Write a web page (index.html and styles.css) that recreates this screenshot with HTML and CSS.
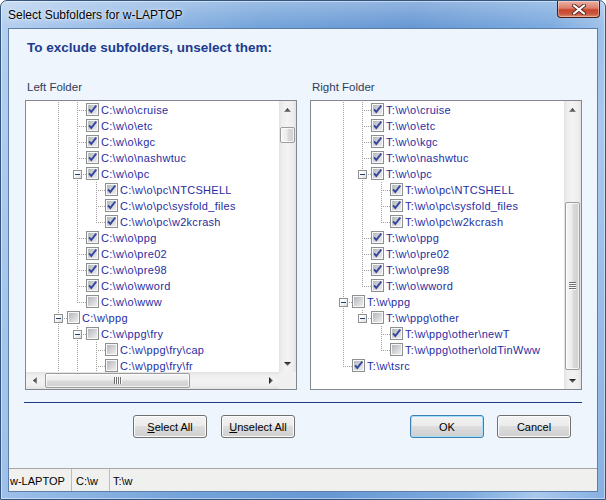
FILE: index.html
```html
<!DOCTYPE html>
<html>
<head>
<meta charset="utf-8">
<title>Select Subfolders for w-LAPTOP</title>
<link rel="stylesheet" href="styles.css">
</head>
<body>
<svg class="defs" width="0" height="0" aria-hidden="true">
  <defs>
    <linearGradient id="cbg" x1="0" y1="0" x2="1" y2="1">
      <stop offset="0" stop-color="#b4b8bd"/>
      <stop offset="1" stop-color="#eeeeee"/>
    </linearGradient>
    <linearGradient id="arw" x1="0" y1="0" x2="0" y2="1">
      <stop offset="0" stop-color="#1a1a1a"/>
      <stop offset="1" stop-color="#8a8a8a"/>
    </linearGradient>
    <linearGradient id="arwh" x1="0" y1="0" x2="1" y2="0">
      <stop offset="0" stop-color="#1a1a1a"/>
      <stop offset="1" stop-color="#8a8a8a"/>
    </linearGradient>
    <symbol id="on" viewBox="0 0 13 13">
      <rect x=".5" y=".5" width="12" height="12" fill="#f7f7f7" stroke="#8e8f8f"/>
      <rect x="2" y="2" width="9" height="9" fill="url(#cbg)"/>
      <path d="M3 6.3 L5.3 8.9 L10.3 2.5" fill="none" stroke="#33479b" stroke-width="1.9"/>
    </symbol>
    <symbol id="off" viewBox="0 0 13 13">
      <rect x=".5" y=".5" width="12" height="12" fill="#f7f7f7" stroke="#8e8f8f"/>
      <rect x="2" y="2" width="9" height="9" fill="url(#cbg)"/>
    </symbol>
    <symbol id="up" viewBox="0 0 7 4"><polygon points="0,4 3.5,0 7,4" fill="url(#arw)"/></symbol>
    <symbol id="dn" viewBox="0 0 7 4"><polygon points="0,0 7,0 3.5,4" fill="url(#arw)"/></symbol>
    <symbol id="lt" viewBox="0 0 4 7"><polygon points="4,0 4,7 0,3.5" fill="url(#arwh)"/></symbol>
    <symbol id="rt" viewBox="0 0 4 7"><polygon points="0,0 4,3.5 0,7" fill="url(#arwh)"/></symbol>
  </defs>
</svg>

<div class="window">
  <div class="titlebar">
    <span class="title">Select Subfolders for w-LAPTOP</span>
    <div class="close">
      <svg width="14" height="11" viewBox="0 0 14 11">
        <path d="M2 1.5 L12 9.5 M12 1.5 L2 9.5" stroke="#5a2a22" stroke-width="4" stroke-linecap="round"/>
        <path d="M2 1.5 L12 9.5 M12 1.5 L2 9.5" stroke="#ffffff" stroke-width="2.2" stroke-linecap="round"/>
      </svg>
    </div>
  </div>

  <div class="client">
    <div class="content">
      <h1 class="heading">To exclude subfolders, unselect them:</h1>

      <div class="panes">
        <div class="pane">
          <div class="pane-label">Left Folder</div>
          <div class="tree-box with-h">
            <div class="tree">
              <div class="row"><i class="c"></i><i class="c v"></i><i class="k t"></i><svg class="cb"><use href="#on"/></svg><span class="tx">C:\w\o\cruise</span></div>
              <div class="row"><i class="c"></i><i class="c v"></i><i class="k t"></i><svg class="cb"><use href="#on"/></svg><span class="tx">C:\w\o\etc</span></div>
              <div class="row"><i class="c"></i><i class="c v"></i><i class="k t"></i><svg class="cb"><use href="#on"/></svg><span class="tx">C:\w\o\kgc</span></div>
              <div class="row"><i class="c"></i><i class="c v"></i><i class="k t"></i><svg class="cb"><use href="#on"/></svg><span class="tx">C:\w\o\nashwtuc</span></div>
              <div class="row"><i class="c"></i><i class="c v"></i><i class="k t"><b class="exp"></b></i><svg class="cb"><use href="#on"/></svg><span class="tx">C:\w\o\pc</span></div>
              <div class="row"><i class="c"></i><i class="c v"></i><i class="c v"></i><i class="k t"></i><svg class="cb"><use href="#on"/></svg><span class="tx">C:\w\o\pc\NTCSHELL</span></div>
              <div class="row"><i class="c"></i><i class="c v"></i><i class="c v"></i><i class="k t"></i><svg class="cb"><use href="#on"/></svg><span class="tx">C:\w\o\pc\sysfold_files</span></div>
              <div class="row"><i class="c"></i><i class="c v"></i><i class="c v"></i><i class="k l"></i><svg class="cb"><use href="#on"/></svg><span class="tx">C:\w\o\pc\w2kcrash</span></div>
              <div class="row"><i class="c"></i><i class="c v"></i><i class="k t"></i><svg class="cb"><use href="#on"/></svg><span class="tx">C:\w\o\ppg</span></div>
              <div class="row"><i class="c"></i><i class="c v"></i><i class="k t"></i><svg class="cb"><use href="#on"/></svg><span class="tx">C:\w\o\pre02</span></div>
              <div class="row"><i class="c"></i><i class="c v"></i><i class="k t"></i><svg class="cb"><use href="#on"/></svg><span class="tx">C:\w\o\pre98</span></div>
              <div class="row"><i class="c"></i><i class="c v"></i><i class="k t"></i><svg class="cb"><use href="#on"/></svg><span class="tx">C:\w\o\wword</span></div>
              <div class="row"><i class="c"></i><i class="c v"></i><i class="k l"></i><svg class="cb"><use href="#off"/></svg><span class="tx">C:\w\o\www</span></div>
              <div class="row"><i class="c"></i><i class="k t"><b class="exp"></b></i><svg class="cb"><use href="#off"/></svg><span class="tx">C:\w\ppg</span></div>
              <div class="row"><i class="c"></i><i class="c v"></i><i class="k t"><b class="exp"></b></i><svg class="cb"><use href="#off"/></svg><span class="tx">C:\w\ppg\fry</span></div>
              <div class="row"><i class="c"></i><i class="c v"></i><i class="c v"></i><i class="k t"></i><svg class="cb"><use href="#off"/></svg><span class="tx">C:\w\ppg\fry\cap</span></div>
              <div class="row"><i class="c"></i><i class="c v"></i><i class="c v"></i><i class="k t"></i><svg class="cb"><use href="#off"/></svg><span class="tx">C:\w\ppg\fry\fr</span></div>
            </div>
            <div class="vscroll">
              <div class="arrow"><svg class="ag-v"><use href="#up"/></svg></div>
              <div class="vtrack"><div class="vthumb thumb-l"></div></div>
              <div class="arrow"><svg class="ag-v"><use href="#dn"/></svg></div>
            </div>
            <div class="hscroll">
              <div class="harrow"><svg class="ag-h"><use href="#lt"/></svg></div>
              <div class="htrack"><div class="hthumb"><span class="hgrip"></span></div></div>
              <div class="harrow"><svg class="ag-h"><use href="#rt"/></svg></div>
            </div>
            <div class="corner"></div>
          </div>
        </div>

        <div class="pane">
          <div class="pane-label">Right Folder</div>
          <div class="tree-box">
            <div class="tree">
              <div class="row"><i class="c"></i><i class="c v"></i><i class="k t"></i><svg class="cb"><use href="#on"/></svg><span class="tx">T:\w\o\cruise</span></div>
              <div class="row"><i class="c"></i><i class="c v"></i><i class="k t"></i><svg class="cb"><use href="#on"/></svg><span class="tx">T:\w\o\etc</span></div>
              <div class="row"><i class="c"></i><i class="c v"></i><i class="k t"></i><svg class="cb"><use href="#on"/></svg><span class="tx">T:\w\o\kgc</span></div>
              <div class="row"><i class="c"></i><i class="c v"></i><i class="k t"></i><svg class="cb"><use href="#on"/></svg><span class="tx">T:\w\o\nashwtuc</span></div>
              <div class="row"><i class="c"></i><i class="c v"></i><i class="k t"><b class="exp"></b></i><svg class="cb"><use href="#on"/></svg><span class="tx">T:\w\o\pc</span></div>
              <div class="row"><i class="c"></i><i class="c v"></i><i class="c v"></i><i class="k t"></i><svg class="cb"><use href="#on"/></svg><span class="tx">T:\w\o\pc\NTCSHELL</span></div>
              <div class="row"><i class="c"></i><i class="c v"></i><i class="c v"></i><i class="k t"></i><svg class="cb"><use href="#on"/></svg><span class="tx">T:\w\o\pc\sysfold_files</span></div>
              <div class="row"><i class="c"></i><i class="c v"></i><i class="c v"></i><i class="k l"></i><svg class="cb"><use href="#on"/></svg><span class="tx">T:\w\o\pc\w2kcrash</span></div>
              <div class="row"><i class="c"></i><i class="c v"></i><i class="k t"></i><svg class="cb"><use href="#on"/></svg><span class="tx">T:\w\o\ppg</span></div>
              <div class="row"><i class="c"></i><i class="c v"></i><i class="k t"></i><svg class="cb"><use href="#on"/></svg><span class="tx">T:\w\o\pre02</span></div>
              <div class="row"><i class="c"></i><i class="c v"></i><i class="k t"></i><svg class="cb"><use href="#on"/></svg><span class="tx">T:\w\o\pre98</span></div>
              <div class="row"><i class="c"></i><i class="c v"></i><i class="k l"></i><svg class="cb"><use href="#on"/></svg><span class="tx">T:\w\o\wword</span></div>
              <div class="row"><i class="c"></i><i class="k t"><b class="exp"></b></i><svg class="cb"><use href="#off"/></svg><span class="tx">T:\w\ppg</span></div>
              <div class="row"><i class="c"></i><i class="c v"></i><i class="k l"><b class="exp"></b></i><svg class="cb"><use href="#off"/></svg><span class="tx">T:\w\ppg\other</span></div>
              <div class="row"><i class="c"></i><i class="c v"></i><i class="c"></i><i class="k t"></i><svg class="cb"><use href="#on"/></svg><span class="tx">T:\w\ppg\other\newT</span></div>
              <div class="row"><i class="c"></i><i class="c v"></i><i class="c"></i><i class="k l"></i><svg class="cb"><use href="#off"/></svg><span class="tx">T:\w\ppg\other\oldTinWww</span></div>
              <div class="row"><i class="c"></i><i class="k l"></i><svg class="cb"><use href="#on"/></svg><span class="tx">T:\w\tsrc</span></div>
            </div>
            <div class="vscroll">
              <div class="arrow"><svg class="ag-v"><use href="#up"/></svg></div>
              <div class="vtrack"><div class="vthumb thumb-r"><span class="vgrip"></span></div></div>
              <div class="arrow"><svg class="ag-v"><use href="#dn"/></svg></div>
            </div>
          </div>
        </div>
      </div>

      <div class="separator"></div>

      <div class="buttons">
        <div class="btn-group">
          <button class="btn"><u>S</u>elect All</button>
          <button class="btn"><u>U</u>nselect All</button>
        </div>
        <div class="btn-group right">
          <button class="btn default">OK</button>
          <button class="btn">Cancel</button>
        </div>
      </div>
    </div>

    <div class="statusbar">
      <div class="panel p1">w-LAPTOP</div>
      <div class="panel p2">C:\w</div>
      <div class="panel p3">T:\w</div>
    </div>
  </div>
</div>
</body>
</html>
```

FILE: styles.css
```css
* { box-sizing: border-box; }

body {
  margin: 0;
  background: #ffffff;
  font-family: "Liberation Sans", Arial, sans-serif;
}

.defs {
  display: block;
  width: 0;
  height: 0;
  overflow: hidden;
}

/* ---------- window frame ---------- */
.window {
  width: 606px;
  height: 500px;
  display: flex;
  flex-direction: column;
  padding: 0 7px 7px 7px;
  border: 1px solid #34557e;
  border-radius: 7px 7px 0 0;
  background:
    linear-gradient(to bottom, rgba(255,255,255,0.28), rgba(255,255,255,0) 26px),
    linear-gradient(100deg, #b6d0ef 0%, #98bce8 16%, #75a4da 38%, #6898d4 60%, #7dabdf 80%, #a9c8ed 90%, #86b0e2 100%);
  box-shadow: inset 0 0 0 1px rgba(255,255,255,0.45);
}

.titlebar {
  height: 27px;
  display: flex;
  align-items: center;
  margin-right: -7px;
}

.title {
  flex: 1;
  font-size: 12px;
  color: #000;
  padding-top: 1px;
  text-shadow: 0 0 6px rgba(255,255,255,0.9), 0 0 2px rgba(255,255,255,0.8);
}

.close {
  align-self: flex-start;
  width: 43px;
  height: 17px;
  margin-right: 5px;
  border: 1px solid #4d1c14;
  border-top: none;
  border-radius: 0 0 4px 4px;
  background: linear-gradient(to bottom, #eab1a6 0%, #dc7d6a 45%, #c8462c 55%, #c9583f 80%, #e08a6c 100%);
  box-shadow: inset 0 0 0 1px rgba(255,255,255,0.35);
  display: flex;
  align-items: center;
  justify-content: center;
}

/* ---------- client area ---------- */
.client {
  height: 464px;
  display: flex;
  flex-direction: column;
  background: #eef5fd;
  border: 1px solid #5d7ea9;
}

.content {
  padding: 11px 15px 0 16px;
}

.heading {
  margin: 0;
  padding-left: 2px;
  font-size: 13.5px;
  line-height: 16px;
  font-weight: bold;
  color: #1b3c8f;
}

.panes {
  display: flex;
  gap: 13px;
  margin-top: 23px;
}

.pane {
  width: 272px;
}

.pane-label {
  padding-left: 2px;
  font-size: 11.5px;
  line-height: 16px;
  color: #313c58;
  margin-bottom: 5px;
}

.tree-box {
  height: 290px;
  border: 1px solid #828790;
  background: #ffffff;
  display: grid;
  grid-template-columns: 1fr 17px;
  grid-template-rows: 1fr;
}

.tree-box.with-h {
  grid-template-rows: 1fr 17px;
}

/* ---------- tree ---------- */
.tree {
  overflow: hidden;
  padding: 1px 0 0 4px;
  min-height: 0;
}

.row {
  height: 16px;
  display: flex;
  align-items: flex-start;
  white-space: nowrap;
}

.c, .k {
  display: flex;
  height: 16px;
  flex: none;
  background-repeat: no-repeat;
}

.c { width: 19px; }
.k { width: 18px; }

.c.v {
  background-image: repeating-linear-gradient(to bottom, #a0a0a0 0 1px, transparent 1px 2px);
  background-size: 1px 16px;
  background-position: 9px 0;
}

.k.t {
  background-image:
    repeating-linear-gradient(to bottom, #a0a0a0 0 1px, transparent 1px 2px),
    repeating-linear-gradient(to right, transparent 0 1px, #a0a0a0 1px 2px);
  background-size: 1px 16px, 8px 1px;
  background-position: 9px 0, 10px 8px;
}

.k.l {
  background-image:
    repeating-linear-gradient(to bottom, #a0a0a0 0 1px, transparent 1px 2px),
    repeating-linear-gradient(to right, transparent 0 1px, #a0a0a0 1px 2px);
  background-size: 1px 9px, 8px 1px;
  background-position: 9px 0, 10px 8px;
}

.exp {
  width: 9px;
  height: 9px;
  margin: 4px 0 0 5px;
  border: 1px solid #919191;
  background: linear-gradient(135deg, #ffffff 30%, #dcdcdc 100%);
  display: flex;
  align-items: center;
  justify-content: center;
}

.exp::after {
  content: "";
  width: 5px;
  height: 1px;
  background: #1e3f77;
}

.cb {
  width: 13px;
  height: 13px;
  flex: none;
  margin-top: 1px;
}

.tx {
  margin-left: 2px;
  font-size: 11px;
  line-height: 16px;
  letter-spacing: 0.3px;
  color: #1f2ea2;
}

/* ---------- scrollbars ---------- */
.vscroll {
  display: flex;
  flex-direction: column;
  min-height: 0;
  background: linear-gradient(to right, #e2e2e2 0%, #eeeeee 18%, #f3f3f3 50%, #eeeeee 82%, #e2e2e2 100%);
}

.arrow {
  height: 17px;
  flex: none;
  display: flex;
  align-items: center;
  justify-content: center;
}

.ag-v {
  width: 7px;
  height: 4px;
}

.vtrack {
  flex: 1;
  display: flex;
  flex-direction: column;
  padding: 0 1px;
}

.vthumb {
  border: 1px solid #9c9c9c;
  border-radius: 2px;
  background: linear-gradient(to right, #f6f6f6 0%, #ececec 45%, #dadada 55%, #cfcfcf 100%);
  box-shadow: inset 0 0 0 1px rgba(255,255,255,0.75);
  display: flex;
  align-items: center;
  justify-content: center;
}

.thumb-l {
  margin-top: 9px;
  height: 16px;
}

.thumb-r {
  margin-top: 84px;
  height: 168px;
}

.vgrip {
  width: 7px;
  height: 8px;
  background: repeating-linear-gradient(to bottom, #707070 0 1px, #fbfbfb 1px 2px);
}

.hscroll {
  display: flex;
  background: linear-gradient(to bottom, #e2e2e2 0%, #eeeeee 18%, #f3f3f3 50%, #eeeeee 82%, #e2e2e2 100%);
}

.harrow {
  width: 17px;
  flex: none;
  display: flex;
  align-items: center;
  justify-content: center;
}

.ag-h {
  width: 4px;
  height: 7px;
}

.htrack {
  flex: 1;
  display: flex;
  padding: 1px 0;
}

.hthumb {
  margin-left: 2px;
  width: 145px;
  border: 1px solid #9c9c9c;
  border-radius: 2px;
  background: linear-gradient(to bottom, #f6f6f6 0%, #ececec 45%, #dadada 55%, #cfcfcf 100%);
  box-shadow: inset 0 0 0 1px rgba(255,255,255,0.75);
  display: flex;
  align-items: center;
  justify-content: center;
}

.hgrip {
  width: 8px;
  height: 7px;
  background: repeating-linear-gradient(to right, #707070 0 1px, #fbfbfb 1px 2px);
}

.corner {
  background: #f0f0f0;
}

/* ---------- separator and buttons ---------- */
.separator {
  height: 1px;
  margin: 12px 0 0 -1px;
  background: #1d3a8a;
}

.buttons {
  display: flex;
  gap: 13px;
  margin-top: 12px;
}

.btn-group {
  width: 272px;
  display: flex;
  justify-content: flex-end;
  gap: 14px;
  padding-right: 2px;
}

.btn-group.right {
  gap: 13px;
  padding-right: 11px;
}

.btn {
  width: 74px;
  height: 23px;
  padding: 0;
  border: 1px solid #707070;
  border-radius: 3px;
  background: linear-gradient(to bottom, #f2f2f2 0%, #ebebeb 50%, #dddddd 50%, #cfcfcf 100%);
  box-shadow: inset 0 0 0 1px #fcfcfc;
  font-family: "Liberation Sans", Arial, sans-serif;
  font-size: 11px;
  color: #000;
}

.btn.default {
  border-color: #3c7fb1;
  box-shadow: inset 0 0 0 1px #a5e0fb;
}

/* ---------- status bar ---------- */
.statusbar {
  margin-top: auto;
  height: 23px;
  display: flex;
  align-items: stretch;
  border-top: 1px solid #a7a7a7;
  background: #f0f0ef;
  font-size: 11px;
  color: #000;
}

.panel {
  display: flex;
  align-items: center;
  padding-top: 1px;
}

.p1 {
  width: 63px;
  padding-left: 1px;
  border-right: 1px solid #bdbdbd;
}

.p2 {
  width: 38px;
  padding-left: 4px;
  border-right: 1px solid #bdbdbd;
}

.p3 {
  padding-left: 3px;
}
```
